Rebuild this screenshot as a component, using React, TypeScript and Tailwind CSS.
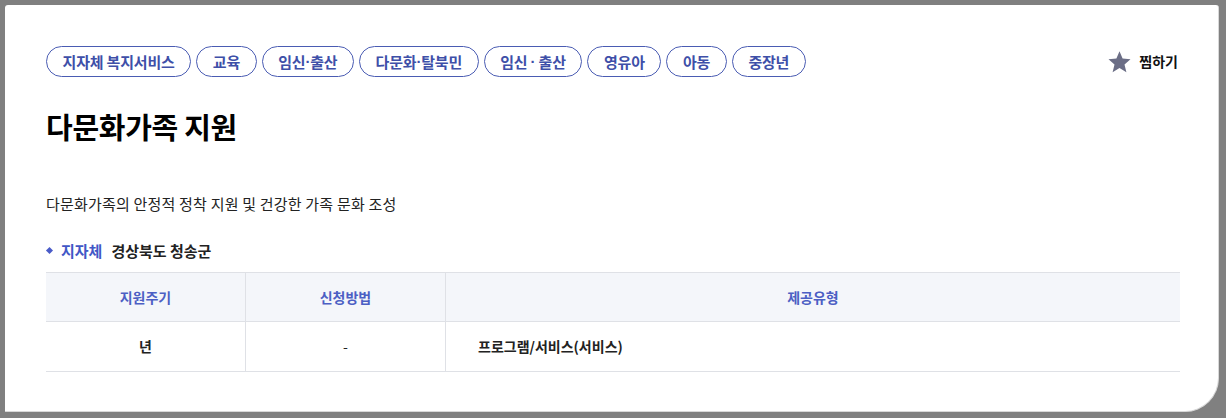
import React from 'react';

const tags: React.ReactNode[] = [
  '지자체 복지서비스',
  '교육',
  <>임신<span className="font-['Liberation_Sans',sans-serif]">·</span>출산</>,
  <>다문화<span className="font-['Liberation_Sans',sans-serif]">·</span>탈북민</>,
  <>임신 <span className="font-['Liberation_Sans',sans-serif]">·</span> 출산</>,
  '영유아',
  '아동',
  '중장년',
];

function StarIcon() {
  return (
    <svg width="25" height="24" viewBox="0 0 24 24" aria-hidden="true">
      <path d="M12 1.2l3.1 7.4 7.9.6-6 5.2 1.9 7.8L12 18l-6.9 4.2L7 14.4 1 9.2l7.9-.6z" fill="#6b6e86" />
    </svg>
  );
}

export default function App() {
  return (
    <div className="w-[1226px] h-[418px] bg-[#808080] pt-[5px] pl-[5px] pr-[7px] pb-[6px]" style={{ fontFamily: '"Noto Sans CJK KR", "Noto Sans", sans-serif' }}>
      <div className="h-full bg-white rounded-tl-[3px] rounded-tr-[3px] rounded-br-[34px] border-r border-b border-[#d8d8d8] pl-[41px] pr-[38px] pt-[41px]">
        <div className="flex items-center justify-between">
          <div className="flex gap-[5px]">
            {tags.map((t, i) => (
              <span key={i} className="h-[31px] px-[15.6px] flex items-center whitespace-pre rounded-full border border-[#4a5cb3] text-[#3e4fa8] text-[15px] font-bold leading-none tracking-[-0.2px]">
                {t}
              </span>
            ))}
          </div>
          <div className="flex items-center gap-[7px] text-[14px] font-bold text-[#111] mr-[2px]">
            <StarIcon />
            <span>찜하기</span>
          </div>
        </div>

        <h1 className="mt-[35px] text-[29px] font-bold leading-none text-black tracking-[-0.3px]">다문화가족 지원</h1>

        <p className="mt-[55px] text-[15px] leading-none text-[#222] tracking-[0.2px]">다문화가족의 안정적 정착 지원 및 건강한 가족 문화 조성</p>

        <div className="mt-[32px] flex items-center text-[15px] font-bold leading-none">
          <span className="w-[5px] h-[5px] bg-[#4a5cc8] rotate-45 ml-[1px] mr-[9px]"></span>
          <span className="text-[#4157c6]">지자체</span>
          <span className="ml-[9px] text-[#222]">경상북도 청송군</span>
        </div>

        <div className="mt-[14px] border-t border-[#dfe1e6]">
          <div className="grid grid-cols-[200px_200px_1fr] h-[49px] bg-[#f4f6fa] border-b border-[#dfe1e6] text-[14px] font-bold text-[#4c5fc4]">
            <div className="flex items-center justify-center border-r border-[#dfe1e6]">지원주기</div>
            <div className="flex items-center justify-center border-r border-[#dfe1e6]">신청방법</div>
            <div className="flex items-center justify-center">제공유형</div>
          </div>
          <div className="grid grid-cols-[200px_200px_1fr] h-[50px] border-b border-[#dfe1e6] text-[14px] font-bold text-[#222]">
            <div className="flex items-center justify-center border-r border-[#dfe1e6]">년</div>
            <div className="flex items-center justify-center border-r border-[#dfe1e6] font-normal">-</div>
            <div className="flex items-center pl-[32px]">프로그램/서비스(서비스)</div>
          </div>
        </div>
      </div>
    </div>
  );
}
